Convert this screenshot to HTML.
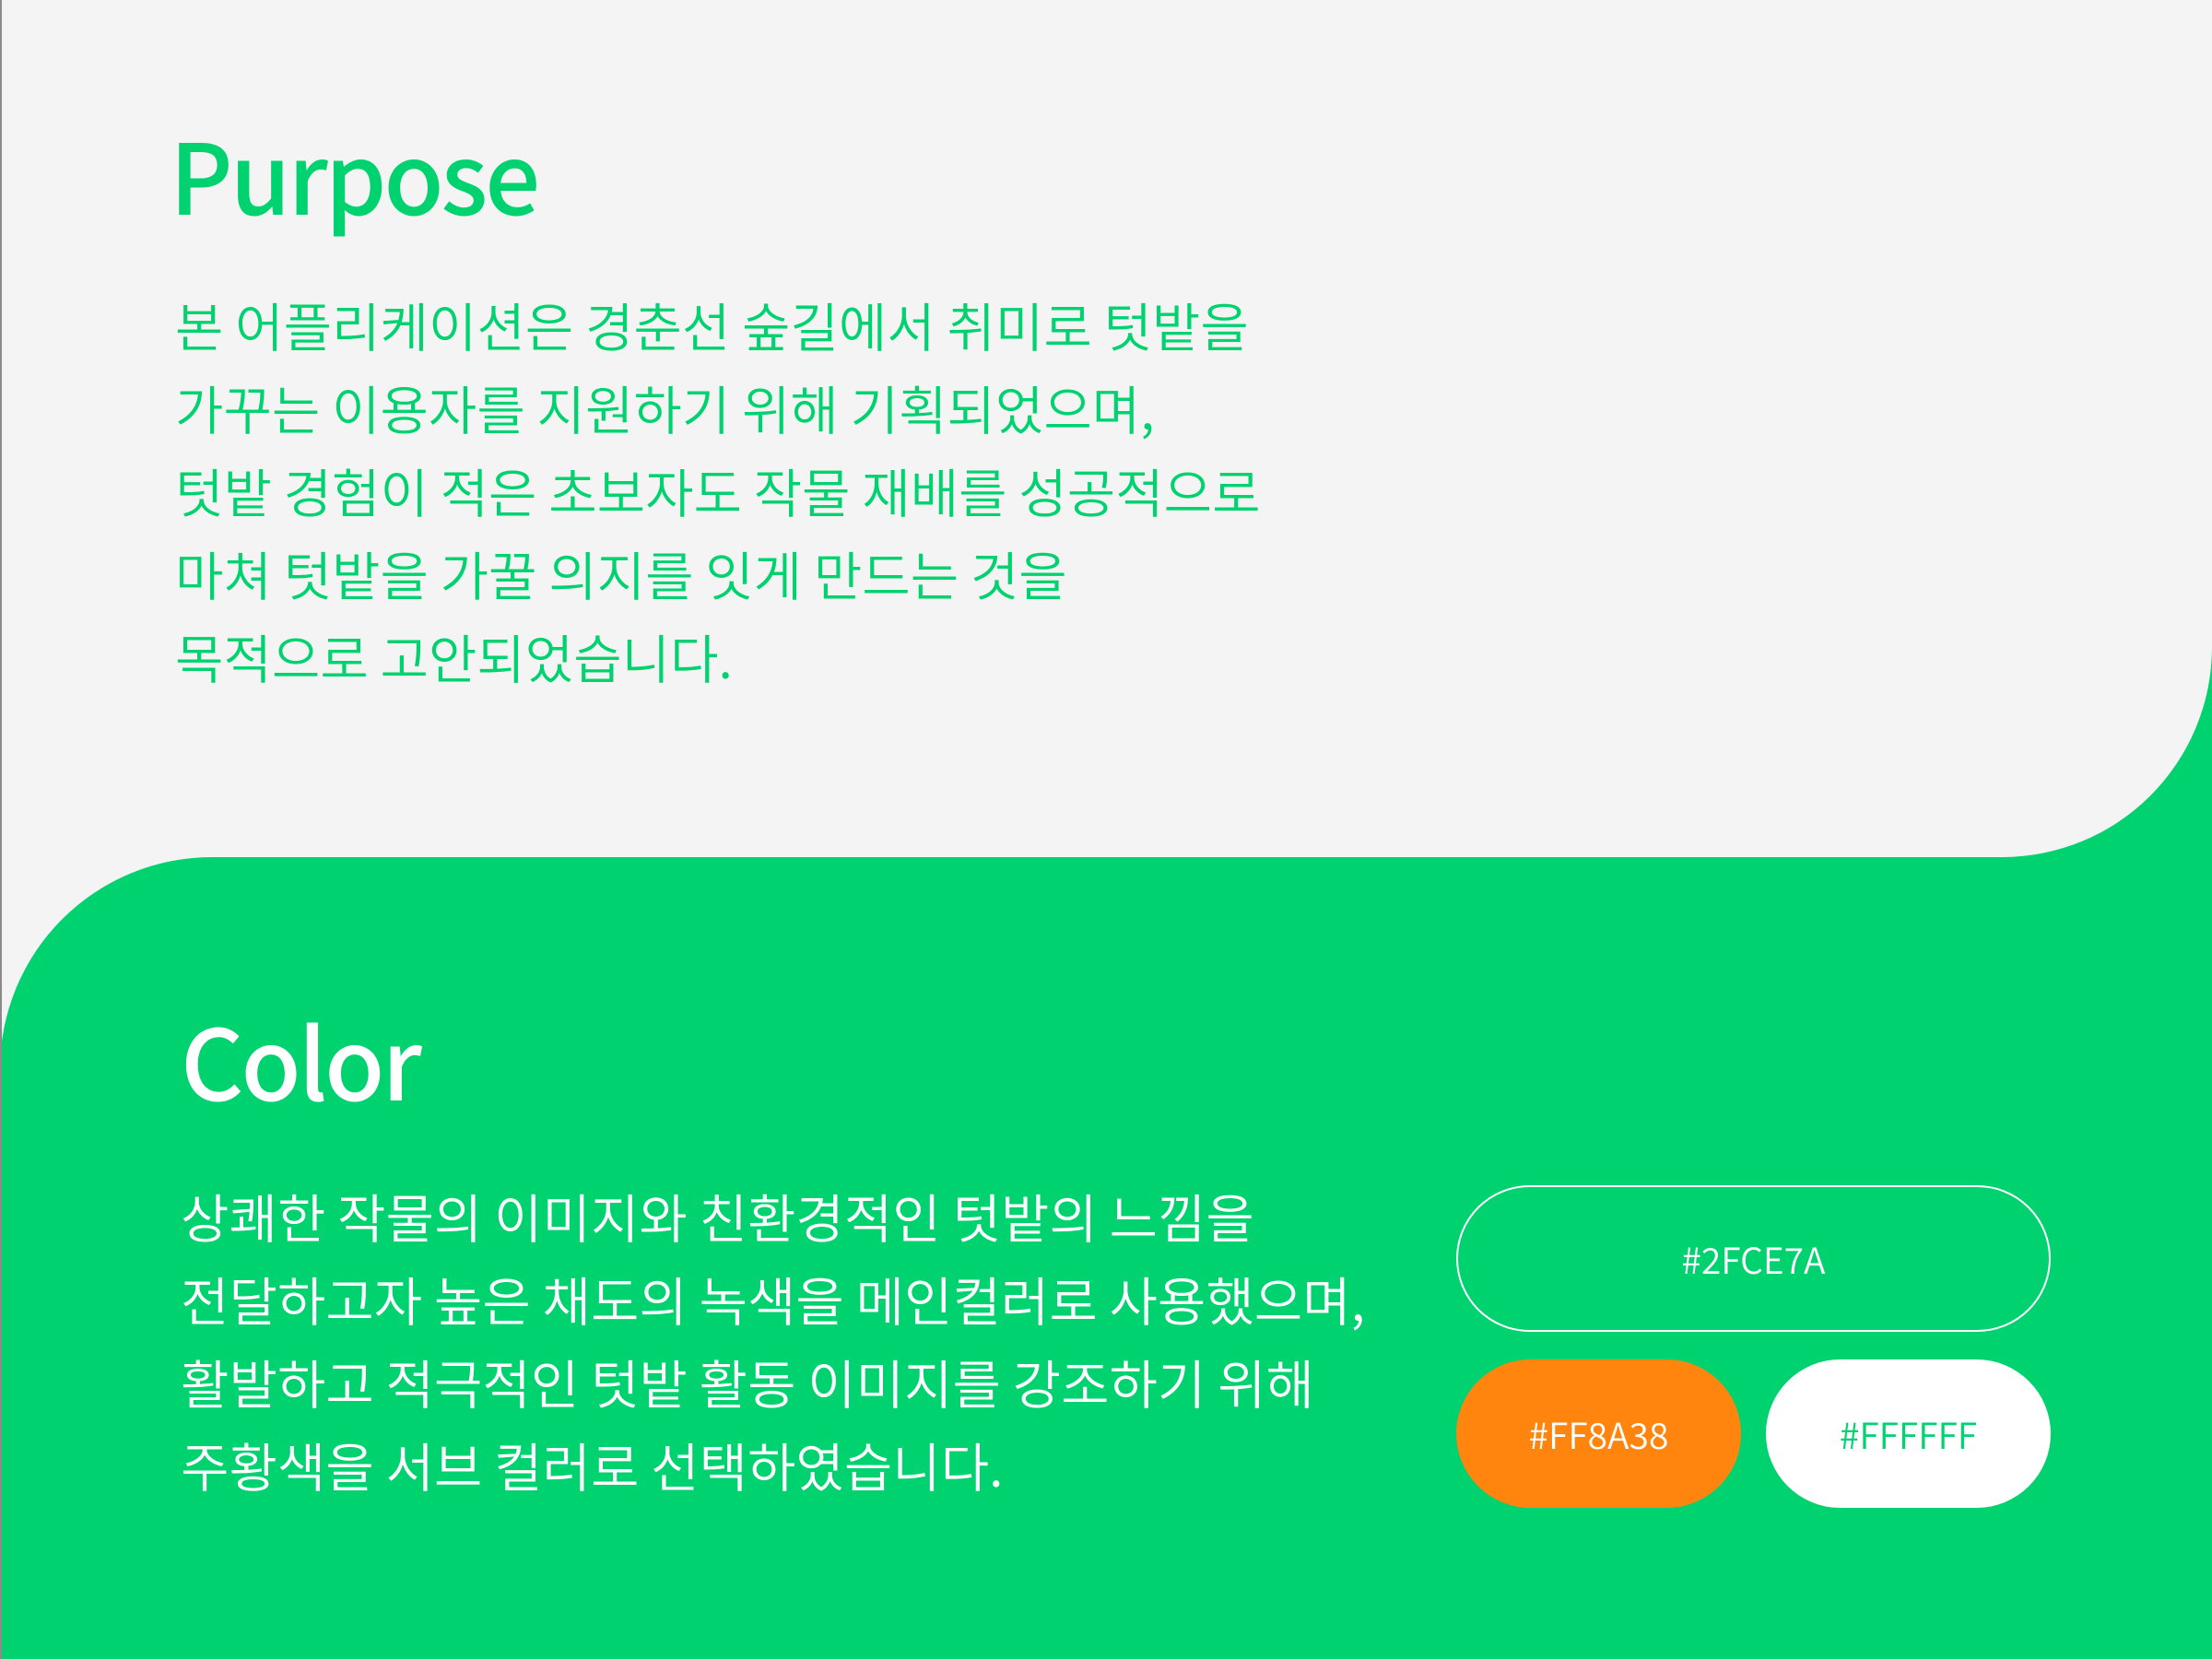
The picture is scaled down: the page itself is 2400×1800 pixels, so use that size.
<!DOCTYPE html>
<html><head><meta charset="utf-8"><style>
html,body{margin:0;padding:0}
body{width:2400px;height:1800px;position:relative;overflow:hidden;background:#00d26f;font-family:"Liberation Sans","Noto Sans CJK KR",sans-serif}
.top{position:absolute;left:0;top:0;width:2400px;height:930px;background:#f4f4f4;border-bottom-right-radius:228px}
.gfill{position:absolute;left:0;top:928px;width:240px;height:240px;background:#f4f4f4}
.green{position:absolute;left:0;top:930px;width:2400px;height:870px;background:#00d26f;border-top-left-radius:230px}
.line{position:absolute;left:0;top:0;width:2px;height:1800px;background:#8a8a8a}
h1{position:absolute;margin:0;font-family:"Noto Sans CJK KR",sans-serif;font-weight:500;font-size:106px;line-height:106px;letter-spacing:-3px}
.p{position:absolute;margin:0;font-family:"Noto Sans CJK KR",sans-serif;font-weight:350;font-size:57px;line-height:90px;white-space:nowrap}
.pill{position:absolute;box-sizing:border-box;border-radius:82px;display:flex;align-items:center;justify-content:center;font-family:"Noto Sans CJK KR",sans-serif;font-weight:350;font-size:39px;color:#fff}
</style></head><body>
<div class="top"></div>
<div class="gfill"></div>
<div class="green"></div>
<div class="line"></div>
<h1 style="left:184px;top:134px;color:#00d26f">Purpose</h1>
<div class="p" style="left:190px;top:307px;color:#00d26f">본 어플리케이션은 경춘선 숲길에서 취미로 텃밭을<br>가꾸는 이용자를 지원하기 위해 기획되었으며,<br>텃밭 경험이 적은 초보자도 작물 재배를 성공적으로<br>마쳐 텃밭을 가꿀 의지를 잇게 만드는 것을<br>목적으로 고안되었습니다.</div>
<h1 style="left:196px;top:1095px;color:#fff">Color</h1>
<div class="p" style="left:196px;top:1274px;color:#fff">상쾌한 작물의 이미지와 친환경적인 텃밭의 느낌을<br>전달하고자 높은 채도의 녹색을 메인컬러로 사용했으며,<br>활발하고 적극적인 텃밭 활동 이미지를 강조하기 위해<br>주황색을 서브 컬러로 선택하였습니다.</div>
<div class="pill" style="left:1580px;top:1286px;width:645px;height:159px;border:2px solid #fff">#2FCE7A</div>
<div class="pill" style="left:1580px;top:1475px;width:309px;height:161px;background:#ff850f">#FF8A38</div>
<div class="pill" style="left:1916px;top:1475px;width:309px;height:161px;background:#fff;color:#00d26f">#FFFFFF</div>
</body></html>
